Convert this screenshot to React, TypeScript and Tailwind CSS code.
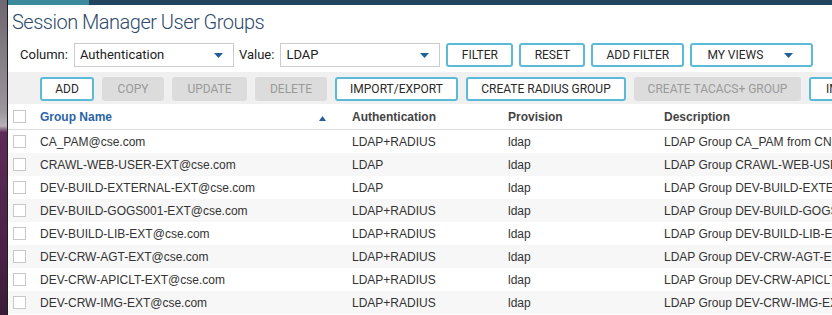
const rows = [
  { name: "CA_PAM@cse.com", auth: "LDAP+RADIUS" },
  { name: "CRAWL-WEB-USER-EXT@cse.com", auth: "LDAP" },
  { name: "DEV-BUILD-EXTERNAL-EXT@cse.com", auth: "LDAP" },
  { name: "DEV-BUILD-GOGS001-EXT@cse.com", auth: "LDAP+RADIUS" },
  { name: "DEV-BUILD-LIB-EXT@cse.com", auth: "LDAP+RADIUS" },
  { name: "DEV-CRW-AGT-EXT@cse.com", auth: "LDAP+RADIUS" },
  { name: "DEV-CRW-APICLT-EXT@cse.com", auth: "LDAP+RADIUS" },
  { name: "DEV-CRW-IMG-EXT@cse.com", auth: "LDAP+RADIUS" },
];

const tools = [
  { label: "ADD", w: "w-[54px]", on: true },
  { label: "COPY", w: "w-[62px]", on: false },
  { label: "UPDATE", w: "w-[75px]", on: false },
  { label: "DELETE", w: "w-[72px]", on: false },
  { label: "IMPORT/EXPORT", w: "w-[123px]", on: true },
  { label: "CREATE RADIUS GROUP", w: "w-[160px]", on: true },
  { label: "CREATE TACACS+ GROUP", w: "w-[167px]", on: false },
  { label: "IMPORT LDAP", w: "w-[110px]", on: true },
];

const Caret = () => (
  <svg width="9" height="5" viewBox="0 0 9 5" className="shrink-0">
    <path d="M0 0h9L4.5 5z" fill="#1f5f9a" />
  </svg>
);

const Select = ({ value, w }: { value: string; w: string }) => (
  <div className={`${w} h-[24px] border border-[#cccccc] bg-white flex items-center justify-between pl-[5px] pr-[10px] text-[13px] text-[#222]`}>
    <span>{value}</span>
    <Caret />
  </div>
);

const Btn = ({ label, w, on = true, caret = false }: { label: string; w: string; on?: boolean; caret?: boolean }) => (
  <div
    className={`${w} h-[24px] shrink-0 rounded-[3px] flex items-center text-[12px] whitespace-nowrap ${
      caret ? "justify-between pl-[15px] pr-[18px]" : "justify-center"
    } ${on ? "border-2 border-[#5bbad6] bg-white text-[#2a2a2a]" : "bg-[#dcdcdc] text-[#9a9a9a]"}`}
  >
    {label}
    {caret && <Caret />}
  </div>
);

const Box = () => <div className="w-[13px] h-[13px] border border-[#c8c8c8] bg-white" />;

export default function App() {
  return (
    <div className="flex w-[832px] h-[315px] overflow-hidden bg-white font-['Roboto',sans-serif]">
      <div className="w-[7px] shrink-0 bg-[linear-gradient(to_bottom,#6e6670_0%,#9c949c_35%,#b8b0b8_40%,#5e2a58_42%,#4a2246_80%,#3a1c36_100%)]" />
      <div className="w-px shrink-0 bg-[#1e1e1e]" />
      <div className="flex-1 min-w-0 overflow-hidden">
        <div className="flex h-[5px]">
          <div className="w-[81px] bg-[#3a8a9c]" />
          <div className="flex-1 bg-[#22445f]" />
        </div>

        <h1 className="pl-[4px] pt-[4px] text-[20px] leading-[26px] font-light tracking-[-0.5px] text-[#2d4a6b]">
          Session Manager User Groups
        </h1>

        <div className="mt-[8px] flex items-center pl-[12px] text-[13px] text-[#222] whitespace-nowrap">
          <span className="mr-[6px]">Column:</span>
          <Select value="Authentication" w="w-[160px]" />
          <span className="ml-[5px] mr-[6px]">Value:</span>
          <Select value="LDAP" w="w-[160px]" />
          <div className="ml-[6px] flex gap-[6px]">
            <Btn label="FILTER" w="w-[67px]" />
            <Btn label="RESET" w="w-[66px]" />
            <Btn label="ADD FILTER" w="w-[93px]" />
            <Btn label="MY VIEWS" w="w-[123px]" caret />
          </div>
        </div>

        <div className="mt-[5px] h-[32px] pt-[2px] bg-[#f0f0f0] flex items-center gap-[8px] pl-[32px]">
          {tools.map((t) => (
            <Btn key={t.label} label={t.label} w={t.w} on={t.on} />
          ))}
        </div>

        <div className="font-['Liberation_Sans',Arial,sans-serif] text-[12px] whitespace-nowrap">
          <div className="flex items-center h-[26px] border-b border-[#dddddd] font-bold text-[#444]">
            <div className="w-[32px] pl-[5px] shrink-0">
              <Box />
            </div>
            <div className="w-[312px] shrink-0 flex items-center justify-between pr-[26px] text-[#2b64a6]">
              <span>Group Name</span>
              <svg width="7" height="5" viewBox="0 0 7 5" className="mt-[4px]">
                <path d="M0 5h7L3.5 0z" fill="#1f5f9a" />
              </svg>
            </div>
            <div className="w-[156px] shrink-0">Authentication</div>
            <div className="w-[156px] shrink-0">Provision</div>
            <div className="shrink-0">Description</div>
          </div>
          {rows.map((r, i) => (
            <div key={r.name} className={`flex items-center h-[23px] text-[#333] ${i % 2 ? "bg-[#f7f7f7]" : "bg-white"}`}>
              <div className="w-[32px] pl-[5px] shrink-0">
                <Box />
              </div>
              <div className="w-[312px] shrink-0">{r.name}</div>
              <div className="w-[156px] shrink-0">{r.auth}</div>
              <div className="w-[156px] shrink-0">ldap</div>
              <div className="shrink-0">
                LDAP Group {r.name.replace("@cse.com", "")} from CN={r.name.replace("@cse.com", "")},OU=Groups
              </div>
            </div>
          ))}
        </div>
      </div>
    </div>
  );
}
